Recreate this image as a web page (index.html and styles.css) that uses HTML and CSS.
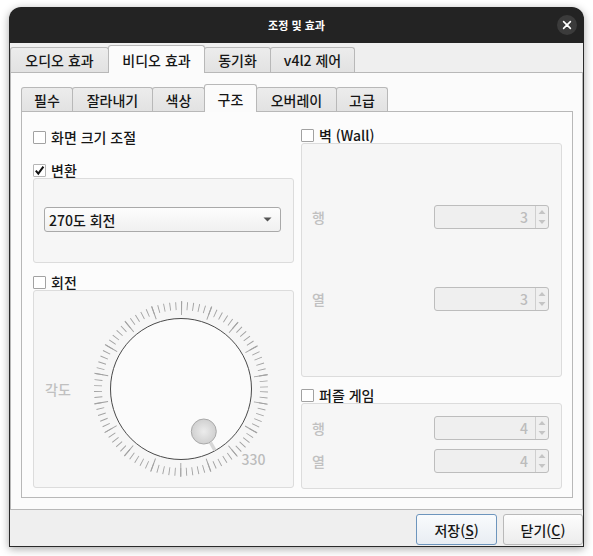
FILE: index.html
```html
<!DOCTYPE html>
<html lang="ko">
<head>
<meta charset="utf-8">
<title>조정 및 효과</title>
<link rel="stylesheet" href="styles.css">
</head>
<body>
<div class="window">
  <div class="titlebar">
    <div></div>
    <div class="title">조정 및 효과</div>
    <div class="close-wrap"><span class="close"><svg width="20" height="20" viewBox="0 0 20 20"><path d="M6.6 6.6 L13.4 13.4 M13.4 6.6 L6.6 13.4" stroke="#fff" stroke-width="1.6" stroke-linecap="round"/></svg></span></div>
  </div>
  <div class="client">
    <div class="tabbar outer-tabs">
      <div class="tab ot1">오디오 효과</div>
      <div class="tab ot2 sel">비디오 효과</div>
      <div class="tab ot3">동기화</div>
      <div class="tab ot4">v4l2 제어</div>
    </div>
    <div class="outer-pane">
      <div class="tabbar inner-tabs">
        <div class="tab it1">필수</div>
        <div class="tab it2">잘라내기</div>
        <div class="tab it3">색상</div>
        <div class="tab it4 sel">구조</div>
        <div class="tab it5">오버레이</div>
        <div class="tab it6">고급</div>
      </div>
      <div class="inner-pane">
        <div class="col col-left">
          <div class="chk row-scale"><span class="box"></span><span>화면 크기 조절</span></div>
          <div class="chk row-transform"><span class="box checked"><svg width="11" height="11" viewBox="0 0 11 11"><path d="M1.8 5.6 L4.3 8.6 L9.4 1.6" fill="none" stroke="#111" stroke-width="2"/></svg></span><span>변환</span></div>
          <div class="group g-transform">
            <div class="combo"><span>270도 회전</span><svg class="combo-arrow" width="9" height="5" viewBox="0 0 9 5"><path d="M0.5 0.5 L8.5 0.5 L4.5 4.5 Z" fill="#555"/></svg></div>
          </div>
          <div class="chk row-rotate"><span class="box"></span><span>회전</span></div>
          <div class="group g-rotate">
            <span class="dim angle-label">각도</span>
            <svg class="dial" width="180" height="180" viewBox="0 0 180 180">
              <circle cx="90" cy="90" r="83" fill="none" stroke="#a2a2a2" stroke-width="8" stroke-dasharray="0.9 4.894" stroke-dashoffset="-2.45"/>
              <circle cx="90" cy="90" r="81" fill="none" stroke="#a2a2a2" stroke-width="14" stroke-dasharray="1 27.274" stroke-dashoffset="-13.64"/>
              <circle cx="90" cy="90" r="70.5" fill="#fbfbfb" stroke="#4a4a4a" stroke-width="1"/>
              <line x1="119.5" y1="143.5" x2="124" y2="151.5" stroke="#d6d6d6" stroke-width="3.5"/>
              <defs>
                <radialGradient id="knob" cx="0.5" cy="0.5" r="0.55">
                  <stop offset="0" stop-color="#ececec"/>
                  <stop offset="1" stop-color="#cdcdcd"/>
                </radialGradient>
              </defs>
              <circle cx="112.8" cy="132.5" r="12.5" fill="url(#knob)" stroke="#a9a9a9" stroke-width="1"/>
              <text class="dial-value" x="150.5" y="165.5">330</text>
            </svg>
          </div>
        </div>
        <div class="col col-right">
          <div class="chk row-wall"><span class="box"></span><span>벽 (Wall)</span></div>
          <div class="group g-wall">
            <div class="form-row"><span class="dim">행</span><div class="spin"><span class="num">3</span><span class="arrows"><svg width="12" height="22" viewBox="0 0 12 22"><path d="M2.5 8 L6 4 L9.5 8 Z M2.5 14 L6 18 L9.5 14 Z" fill="#c4c4c4"/></svg></span></div></div>
            <div class="form-row"><span class="dim">열</span><div class="spin"><span class="num">3</span><span class="arrows"><svg width="12" height="22" viewBox="0 0 12 22"><path d="M2.5 8 L6 4 L9.5 8 Z M2.5 14 L6 18 L9.5 14 Z" fill="#c4c4c4"/></svg></span></div></div>
          </div>
          <div class="chk row-puzzle"><span class="box"></span><span>퍼즐 게임</span></div>
          <div class="group g-puzzle">
            <div class="form-row"><span class="dim">행</span><div class="spin"><span class="num">4</span><span class="arrows"><svg width="12" height="22" viewBox="0 0 12 22"><path d="M2.5 8 L6 4 L9.5 8 Z M2.5 14 L6 18 L9.5 14 Z" fill="#c4c4c4"/></svg></span></div></div>
            <div class="form-row"><span class="dim">열</span><div class="spin"><span class="num">4</span><span class="arrows"><svg width="12" height="22" viewBox="0 0 12 22"><path d="M2.5 8 L6 4 L9.5 8 Z M2.5 14 L6 18 L9.5 14 Z" fill="#c4c4c4"/></svg></span></div></div>
          </div>
        </div>
      </div>
    </div>
    <div class="buttons">
      <div class="btn default">저장(<u>S</u>)</div>
      <div class="btn">닫기(<u>C</u>)</div>
    </div>
  </div>
</div>
</body>
</html>
```

FILE: styles.css
```css
* { box-sizing: border-box; }
html, body { margin: 0; padding: 0; }
body {
  width: 593px;
  height: 556px;
  overflow: hidden;
  background: #ffffff;
  font-family: "Noto Sans CJK KR", "Noto Sans", sans-serif;
  font-size: 14px;
  font-weight: 500;
  color: #161616;
}
.window {
  margin: 7px 0 0 9px;
  width: 575px;
  height: 540px;
  border-radius: 12px 12px 0 0;
  overflow: hidden;
  box-shadow: 0 2px 9px rgba(0, 0, 0, 0.35);
  display: flex;
  flex-direction: column;
}
.titlebar {
  height: 36px;
  flex: none;
  background: #232323;
  display: grid;
  grid-template-columns: 1fr auto 1fr;
  align-items: center;
}
.title {
  color: #ffffff;
  font-weight: bold;
  font-size: 11px;
  line-height: 14px;
}
.close-wrap { display: flex; justify-content: flex-end; padding-right: 7px; }
.close {
  width: 20px;
  height: 20px;
  border-radius: 50%;
  background: #3b3b3b;
  display: flex;
}
.client {
  flex: 1;
  background: #efefef;
  border: 1px solid #2a2a2a;
  border-top: none;
  padding-top: 2px;
  display: flex;
  flex-direction: column;
}
.tabbar {
  display: flex;
  align-items: flex-end;
  height: 27px;
  flex: none;
}
.tab {
  height: 25px;
  border: 1px solid #b8b8b8;
  border-bottom: none;
  border-radius: 3px 3px 0 0;
  background: linear-gradient(#ececec, #e2e2e2);
  margin-right: -1px;
  display: flex;
  align-items: center;
  justify-content: center;
  font-size: 14px;
  line-height: 16px;
  white-space: nowrap;
}
.tab.sel {
  height: 28px;
  margin-bottom: -1px;
  background: #fbfbfb;
  position: relative;
  z-index: 1;
}
.ot1 { width: 99px; }
.ot2 { width: 97px; }
.ot3 { width: 67px; }
.ot4 { width: 85px; }
.inner-tabs .tab { height: 24px; }
.inner-tabs .tab.sel { height: 28px; }
.it1 { width: 52px; }
.it2 { width: 81px; }
.it3 { width: 53px; }
.it4 { width: 53px; }
.it5 { width: 81px; }
.it6 { width: 52px; }
.outer-pane {
  height: 438px;
  flex: none;
  border: 1px solid #b8b8b8;
  background: #fbfbfb;
  padding: 11px 9px 11px 10px;
  display: flex;
  flex-direction: column;
}
.inner-pane {
  height: 387px;
  border: 1px solid #b8b8b8;
  background: #fcfcfc;
  display: grid;
  grid-template-columns: 261px 261px;
  column-gap: 7px;
  padding-left: 11px;
  align-content: start;
}
.col { display: flex; flex-direction: column; }
.chk {
  display: flex;
  align-items: center;
  height: 16px;
  line-height: 16px;
  gap: 5px;
  white-space: nowrap;
}
.box {
  width: 13px;
  height: 13px;
  border: 1px solid #a2a2a2;
  border-radius: 1px;
  background: #ffffff;
  display: flex;
  align-items: center;
  justify-content: center;
  flex: none;
}
.box.checked { border-color: #b5b5b5; }
.row-scale { margin-top: 17px; }
.row-transform { margin-top: 17px; }
.row-rotate { margin-top: 11px; }
.row-wall { margin-top: 15px; }
.row-puzzle { margin-top: 10px; }
.group {
  border: 1px solid #dcdcdc;
  border-radius: 3px;
  background: #f6f6f6;
}
.g-transform { height: 85px; padding: 28px 11px 0 10px; }
.combo {
  width: 237px;
  height: 25px;
  border: 1px solid #a9a9a9;
  border-radius: 3px;
  background: linear-gradient(#fdfdfd, #f0f0f0);
  display: flex;
  align-items: center;
  justify-content: space-between;
  padding: 0 8px 0 4px;
  line-height: 16px;
}
.combo-arrow { display: block; }
.g-rotate {
  height: 198px;
  display: flex;
  align-items: center;
  padding-left: 11px;
}
.angle-label { width: 28px; line-height: 16px; }
.dial { display: block; margin-left: 18px; }
.dial-value {
  font-family: "Noto Sans CJK KR", "Noto Sans", sans-serif;
  font-size: 14px;
  fill: #bcbcbc;
}
.dim { color: #c0c0c0; }
.g-wall {
  height: 234px;
  display: flex;
  flex-direction: column;
  gap: 58px;
  padding: 61px 12px 0 10px;
}
.g-puzzle {
  height: 86px;
  display: flex;
  flex-direction: column;
  gap: 9px;
  padding: 12px 12px 0 10px;
}
.form-row {
  display: flex;
  align-items: center;
  justify-content: space-between;
  height: 24px;
  line-height: 16px;
}
.spin {
  width: 115px;
  height: 24px;
  border: 1px solid #bdbdbd;
  border-radius: 3px;
  background: #efefef;
  display: flex;
}
.num {
  flex: 1;
  text-align: right;
  padding-right: 7px;
  line-height: 22px;
  color: #bcbcbc;
}
.arrows {
  width: 13px;
  border-left: 1px solid #cfcfcf;
  display: flex;
}
.arrows svg { display: block; }
.buttons {
  flex: 1;
  display: flex;
  justify-content: flex-end;
  align-items: flex-start;
  gap: 6px;
  padding-top: 4px;
}
.btn {
  width: 80px;
  height: 31px;
  border: 1px solid #b9b9b9;
  border-radius: 3px;
  background: linear-gradient(#fdfdfd, #ececec);
  display: flex;
  align-items: center;
  justify-content: center;
  line-height: 16px;
}
.btn.default {
  width: 81px;
  border-color: #6d95bd;
  background: linear-gradient(#f9fbfd, #e8edf3);
}
.btn u { text-underline-offset: 2px; }
```
